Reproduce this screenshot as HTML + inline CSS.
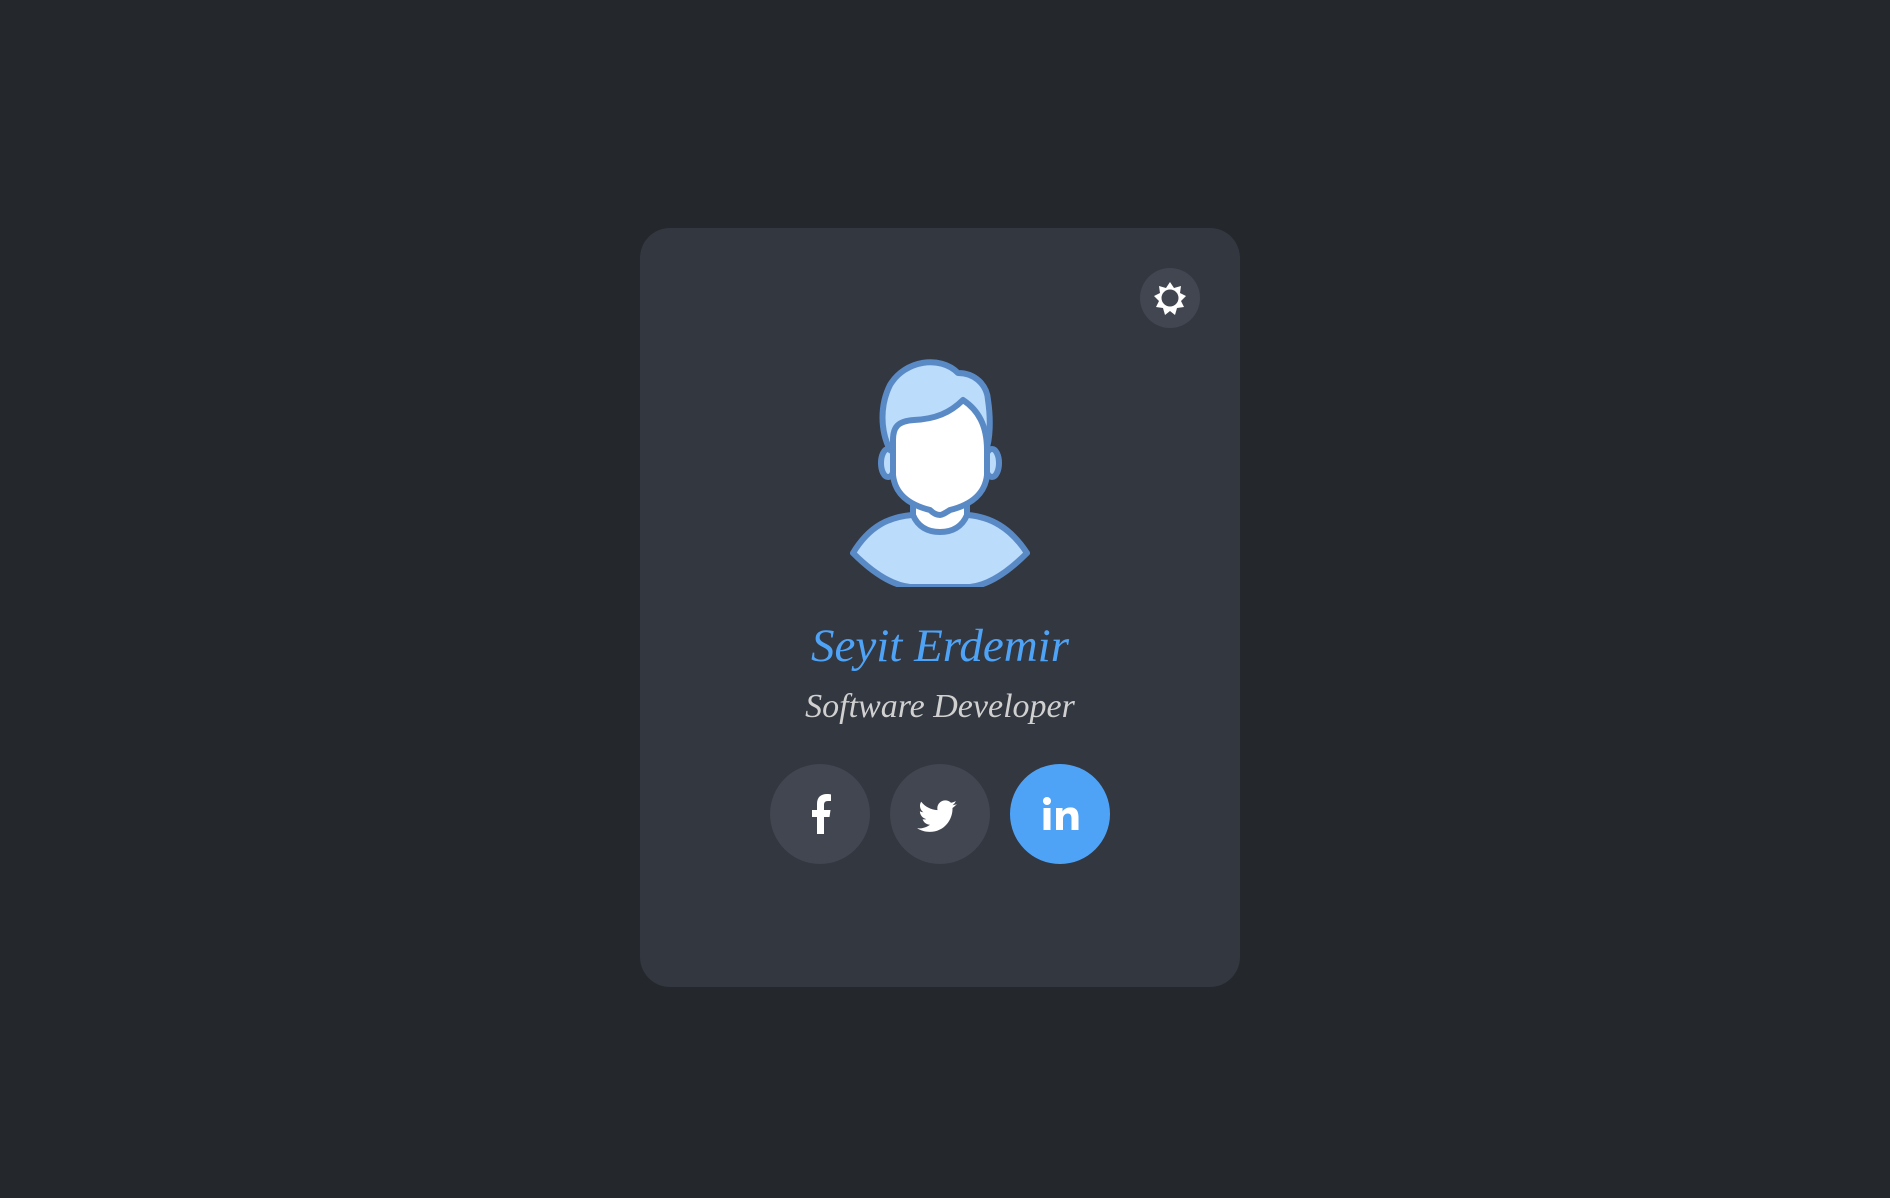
<!DOCTYPE html>
<html><head><meta charset="utf-8"><style>
html,body{margin:0;padding:0}
body{width:1890px;height:1198px;background:#24272c;position:relative;overflow:hidden;font-family:"Liberation Serif",serif}
.card{position:absolute;left:640px;top:228px;width:600px;height:759px;background:#323740;border-radius:30px}
.gear{position:absolute;left:1140px;top:268px;width:60px;height:60px;border-radius:50%;background:#414650}
.name{position:absolute;left:640px;width:600px;top:616px;text-align:center;color:#4fa3f7;font-style:italic;font-size:47px;line-height:60px}
.role{position:absolute;left:640px;width:600px;top:682px;text-align:center;color:#d0d0d0;font-style:italic;font-size:34px;line-height:50px}
.btn{position:absolute;top:764px;width:100px;height:100px;border-radius:50%;background:#414650}
</style></head><body>
<div class="card"></div>
<div class="gear"><svg width="60" height="60" viewBox="0 0 60 60">
<polygon fill="#fff" points="30,14 34,20 41,18 40,25 46,28 41,33 44,39 37,40 35,47 30,43 25,47 23,40 16,39 19,33 14,28 20,25 19,18 26,20"/>
<circle cx="30" cy="30" r="8.5" fill="#414650"/></svg></div>
<svg style="position:absolute;left:850px;top:355px" width="180" height="232" viewBox="0 0 180 232">
<g stroke="#5a8ac6" stroke-width="6" stroke-linejoin="round">
<path d="M3,198 C20,170 40,162 62,160 L118,160 C140,162 160,172 177,198 C160,215 140,230 120,232 L60,232 C40,230 20,215 3,198 Z" fill="#bbdcfb"/>
<path d="M63,130 L63,160 C68,172 78,177 90,177 C102,177 112,172 117,160 L117,130 Z" fill="#fff"/>
<ellipse cx="38" cy="108" rx="7" ry="14" fill="#bbdcfb"/>
<ellipse cx="142" cy="108" rx="7" ry="14" fill="#bbdcfb"/>
<path d="M40,95 C30,75 30,50 40,30 C55,5 90,0 108,18 C125,18 137,30 138,45 C141,65 140,85 136,95 Z" fill="#bbdcfb"/>
<path d="M43,85 C43,72 48,66 64,65 C85,64 100,58 113,45 C128,55 137,70 137,95 L137,120 C135,140 120,150 100,155 C95,158 92,160 90,160 C86,160 83,158 80,155 C60,150 45,140 43,120 Z" fill="#fff"/>
</g></svg>
<div class="name">Seyit Erdemir</div>
<div class="role">Software Developer</div>
<div class="btn" style="left:770px"><svg width="100" height="100" viewBox="0 0 100 100"><path fill="#fff" d="M47,70 L47,53 L42,53 L42,46 L47,46 L47,40 C47,33 51,30 57,30 C59,30 60,30 61,30.5 L61,37 L58,37 C55,37 54,38.5 54,41 L54,46 L60.5,46 L59.5,53 L54,53 L54,70 Z"/></svg></div>
<div class="btn" style="left:890px"><svg width="100" height="100" viewBox="0 0 100 100"><path fill="#fff" d="M67,40 C65.5,40.7 64,41 62.5,41.2 C64,40.2 65.2,38.8 65.8,37 C64.3,37.9 62.7,38.5 61,38.8 C59.5,37.3 57.5,36.4 55.3,36.4 C50.8,36.4 47.3,40 47.3,44.3 C47.3,44.9 47.4,45.5 47.5,46.1 C40.9,45.8 35,42.6 31.2,37.7 C30.4,38.9 30,40.2 30,41.7 C30,44.4 31.4,46.8 33.5,48.3 C32.2,48.2 31,47.9 29.9,47.3 C29.9,51.1 32.6,54.3 36.3,55.1 C35,55.4 33.7,55.5 32.6,55.2 C33.6,58.3 36.5,60.6 40,60.7 C36.2,63.5 31.8,64.7 27.2,64.3 C30.8,66.6 35,67.9 39.6,67.9 C54.4,67.9 62.5,55.6 62.5,45 L62.5,44 C64.1,42.9 65.5,41.5 67,40 Z"/></svg></div>
<div class="btn" style="left:1010px;background:#4fa3f7"><svg width="100" height="100" viewBox="0 0 100 100"><g fill="#fff"><circle cx="37" cy="37" r="4"/><rect x="33.5" y="44" width="7" height="22"/><path d="M46,44 L52.5,44 L52.5,47.5 C54,45 57,43.4 60.5,43.4 C66,43.4 68.5,47 68.5,53 L68.5,66 L61.5,66 L61.5,54.5 C61.5,51.5 60.5,49.5 57.8,49.5 C55,49.5 53,51.5 53,55 L53,66 L46,66 Z"/></g></svg></div>
</body></html>
